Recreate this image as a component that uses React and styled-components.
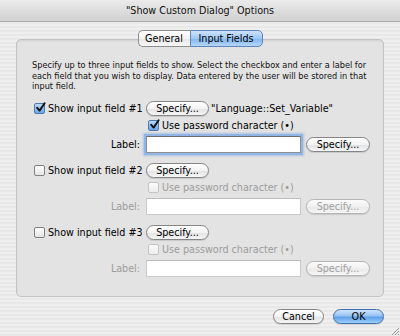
import React from "react";
import styled, { createGlobalStyle } from "styled-components";

const GlobalStyle = createGlobalStyle`
  html, body {
    margin: 0;
    padding: 0;
  }
  body {
    font-family: "Lucida Grande", "DejaVu Sans", sans-serif;
    color: #000;
  }
`;

const Window = styled.div`
  position: relative;
  width: 400px;
  height: 336px;
  display: flex;
  flex-direction: column;
  overflow: hidden;
  background: repeating-linear-gradient(
    to bottom,
    #efefef 0,
    #efefef 2px,
    #e8e8e8 2px,
    #e8e8e8 4px
  );
`;

const TitleBar = styled.div`
  flex: none;
  height: 20px;
  padding-bottom: 1px;
  display: flex;
  align-items: center;
  justify-content: center;
  background: linear-gradient(#ebebeb, #d0d0d0);
  border-bottom: 1px solid #afafaf;
  font-size: 9.6px;
  color: #111;
`;

const TabBar = styled.div`
  position: relative;
  z-index: 1;
  display: flex;
  justify-content: center;
  margin-top: 8px;
  margin-bottom: -8px;
`;

const Tab = styled.div`
  box-sizing: border-box;
  height: 17px;
  width: ${(p) => p.$w}px;
  display: flex;
  align-items: center;
  justify-content: center;
  font-size: 9.6px;
  border: 1px solid #8d8d8d;
  background: ${(p) =>
    p.$active
      ? "linear-gradient(#cfe3fa 0%, #9ec7f3 50%, #80b5ef 51%, #b4d6f8 100%)"
      : "linear-gradient(#ffffff 0%, #f4f4f4 50%, #e6e6e6 51%, #f7f7f7 100%)"};
  border-color: ${(p) => (p.$active ? "#5f86b8" : "#8d8d8d")};
  border-radius: ${(p) => (p.$first ? "5px 0 0 5px" : "0 5px 5px 0")};
  ${(p) => (p.$first ? "border-right: none;" : "")}
`;

const GroupBox = styled.div`
  margin: 0 16px;
  padding: 20px 15px 17px 15px;
  background: #e3e3e3;
  border: 1px solid #c3c3c3;
  border-radius: 5px;
  box-shadow: inset 0 1px 2px rgba(0, 0, 0, 0.08);
`;

const Description = styled.p`
  margin: 0 0 9px 0;
  font-size: 8.2px;
  line-height: 10.5px;
  color: #111;
`;

const FieldGroup = styled.div`
  display: grid;
  grid-template-columns: 108px 1fr;
  column-gap: 6px;
  row-gap: 1px;
  grid-template-rows: 16px 16px 20px;
  margin-bottom: 8px;

  &:last-child {
    margin-bottom: 0;
  }
`;

const Cell = styled.div`
  display: flex;
  align-items: center;
  justify-content: ${(p) => (p.$right ? "flex-end" : "flex-start")};
  gap: ${(p) => p.$gap || 0}px;
  font-size: 9.6px;
  white-space: nowrap;
  color: ${(p) => (p.$disabled ? "#9c9c9c" : "#000")};
`;

const Check = styled.span`
  box-sizing: border-box;
  flex: none;
  width: 11px;
  height: 11px;
  margin-left: 2px;
  margin-right: 3px;
  border-radius: 2px;
  border: 1px solid ${(p) => (p.$disabled ? "#c4c4c4" : p.$on ? "#4f78ad" : "#808080")};
  background: ${(p) =>
    p.$on
      ? "linear-gradient(#bcd9f8, #6aa6ea)"
      : p.$disabled
      ? "linear-gradient(#fbfbfb, #ececec)"
      : "linear-gradient(#ffffff, #e4e4e4)"};
  display: flex;
  align-items: center;
  justify-content: center;
  position: relative;
`;

const CheckMark = () => (
  <svg width="11" height="11" viewBox="0 0 11 11" style={{ position: "absolute", left: 0, top: -2 }}>
    <path d="M2.2 5.8 L4.6 8.6 L9.6 1.2" fill="none" stroke="#111" strokeWidth="1.9" strokeLinecap="round" strokeLinejoin="round" />
  </svg>
);

const Button = styled.div`
  box-sizing: border-box;
  flex: none;
  height: ${(p) => p.$h || 15}px;
  width: ${(p) => p.$w}px;
  display: flex;
  align-items: center;
  justify-content: center;
  font-size: 9.6px;
  border-radius: 8px;
  color: ${(p) => (p.$disabled ? "#a0a0a0" : "#000")};
  border: 1px solid ${(p) => (p.$disabled ? "#b6b6b6" : p.$primary ? "#3f6faf" : "#858585")};
  background: ${(p) =>
    p.$primary
      ? "linear-gradient(#cfe4fb 0%, #97c3f3 45%, #5d9fea 55%, #9fd0fb 100%)"
      : p.$disabled
      ? "linear-gradient(#fbfbfb 0%, #f0f0f0 50%, #e8e8e8 51%, #f6f6f6 100%)"
      : "linear-gradient(#ffffff 0%, #f3f3f3 50%, #e2e2e2 51%, #f6f6f6 100%)"};
  box-shadow: 0 1px 1px rgba(0, 0, 0, 0.12);
`;

const TextInput = styled.div`
  box-sizing: border-box;
  flex: none;
  width: 155px;
  height: 17px;
  background: #fff;
  border: 1px solid ${(p) => (p.$disabled ? "#c9c9c9" : "#8f8f8f")};
  border-top-color: ${(p) => (p.$disabled ? "#bdbdbd" : "#6f6f6f")};
  box-shadow: ${(p) => (p.$focus ? "0 0 0 2px #8fb6e6, 0 0 2px 3px rgba(120,165,225,0.5)" : "none")};
`;

const Footer = styled.div`
  display: flex;
  justify-content: flex-end;
  gap: 9px;
  padding: 12px 16px 0 0;
`;

const Grip = styled.svg`
  position: absolute;
  right: 0;
  bottom: 0;
`;

const fields = [
  { n: 1, on: true, extra: "\"Language::Set_Variable\"" },
  { n: 2, on: false },
  { n: 3, on: false },
];

const Field = ({ n, on, extra }) => {
  const off = !on;
  return (
    <FieldGroup>
      <Cell>
        <Check $on={on}>{on && <CheckMark />}</Check>
        Show input field #{n}
      </Cell>
      <Cell $gap={2}>
        <Button $w={63}>Specify...</Button>
        {extra}
      </Cell>
      <Cell />
      <Cell $disabled={off}>
        <Check $on={on} $disabled={off}>{on && <CheckMark />}</Check>
        Use password character (•)
      </Cell>
      <Cell $right $disabled={off}>Label:</Cell>
      <Cell $gap={5}>
        <TextInput $focus={on} $disabled={off} />
        <Button $w={64} $disabled={off}>Specify...</Button>
      </Cell>
    </FieldGroup>
  );
};

export default function App() {
  return (
    <Window>
      <GlobalStyle />
      <TitleBar>"Show Custom Dialog" Options</TitleBar>
      <TabBar>
        <Tab $first $w={52}>General</Tab>
        <Tab $active $w={73}>Input Fields</Tab>
      </TabBar>
      <GroupBox>
        <Description>
          Specify up to three input fields to show. Select the checkbox and enter a label for
          each field that you wish to display. Data entered by the user will be stored in that
          input field.
        </Description>
        {fields.map((f) => (
          <Field key={f.n} {...f} />
        ))}
      </GroupBox>
      <Footer>
        <Button $w={51}>Cancel</Button>
        <Button $w={51} $primary>OK</Button>
      </Footer>
      <Grip width="11" height="11" viewBox="0 0 11 11">
        <path d="M10 3 L3 10 M10 6 L6 10 M10 9 L9 10" stroke="#9a9a9a" strokeWidth="1" />
      </Grip>
    </Window>
  );
}
